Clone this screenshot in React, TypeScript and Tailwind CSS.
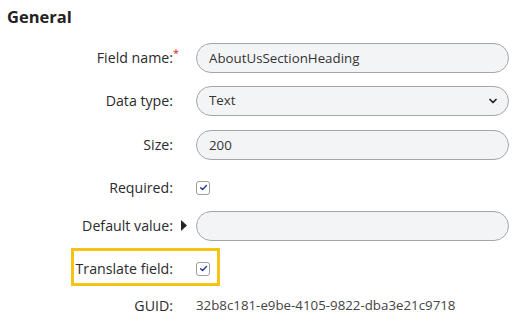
import { ChevronDown } from "lucide-react";

const font = { fontFamily: '"Open Sans", "Noto Sans", sans-serif' };

function Check() {
  return (
    <span className="flex h-[14px] w-[14px] items-center justify-center rounded-[3px] border border-[#9a9ea4] bg-white">
      <svg viewBox="0 0 10 10" className="h-[9px] w-[9px]">
        <path d="M1.8 5.2 L4 7.3 L8.3 2.8" fill="none" stroke="#2f3b9c" strokeWidth="1.6" strokeLinecap="round" strokeLinejoin="round" />
      </svg>
    </span>
  );
}

function Row({ label, required, className = "", children }: { label: string; required?: boolean; className?: string; children: React.ReactNode }) {
  return (
    <div className={`relative flex h-[30px] items-center ${className}`}>
      <div className="w-[173px] shrink-0 text-right text-[14.2px] text-[#2b2b2b]">
        {label}
        {required && <span className="absolute -mt-[2px] text-[11px] text-[#e02424]">*</span>}
      </div>
      {children}
    </div>
  );
}

const inputCls =
  "h-[30px] w-[313px] rounded-full border-[1.5px] border-[#a3a6ab] bg-[#f3f4f6] px-3 text-[13.3px] text-[#333] outline-none";

export default function App() {
  return (
    <div className="min-h-screen bg-white text-[#333]" style={font}>
      <h2 className="pl-[7px] pt-[5px] text-[16.5px] font-bold text-[#222]">General</h2>

      <div className="mt-[13px] flex flex-col">
        <Row label="Field name:" required>
          <input className={`${inputCls} ml-[23px]`} defaultValue="AboutUsSectionHeading" />
        </Row>

        <Row label="Data type:" className="mt-[13px]">
          <div className="relative ml-[23px]">
            <select className={`${inputCls} appearance-none`} defaultValue="text">
              <option value="text">Text</option>
            </select>
            <ChevronDown className="pointer-events-none absolute right-[10px] top-[9px] h-[12px] w-[12px] text-[#222]" strokeWidth={3.5} />
          </div>
        </Row>

        <Row label="Size:" className="mt-[14px]">
          <input className={`${inputCls} ml-[23px]`} defaultValue="200" />
        </Row>

        <Row label="Required:" className="mt-[13px]">
          <span className="ml-[23px]">
            <Check />
          </span>
        </Row>

        <Row label="Default value:" className="mt-[8px]">
          <svg viewBox="0 0 6 11" className="ml-[8px] h-[11px] w-[6px]">
            <path d="M0 0 L6 5.5 L0 11 Z" fill="#222" />
          </svg>
          <input className={`${inputCls} ml-[9px] w-[312px]`} defaultValue="" />
        </Row>

        <Row label="Translate field:" className="mt-[13px]">
          <span className="ml-[23px]">
            <Check />
          </span>
          <div className="pointer-events-none absolute left-[71px] top-[-6px] h-[38px] w-[149px] border-[3px] border-[#f4c315]" />
        </Row>

        <Row label="GUID:" className="mt-[7px]">
          <span className="ml-[23px] text-[13.3px] text-[#444]">32b8c181-e9be-4105-9822-dba3e21c9718</span>
        </Row>
      </div>
    </div>
  );
}
